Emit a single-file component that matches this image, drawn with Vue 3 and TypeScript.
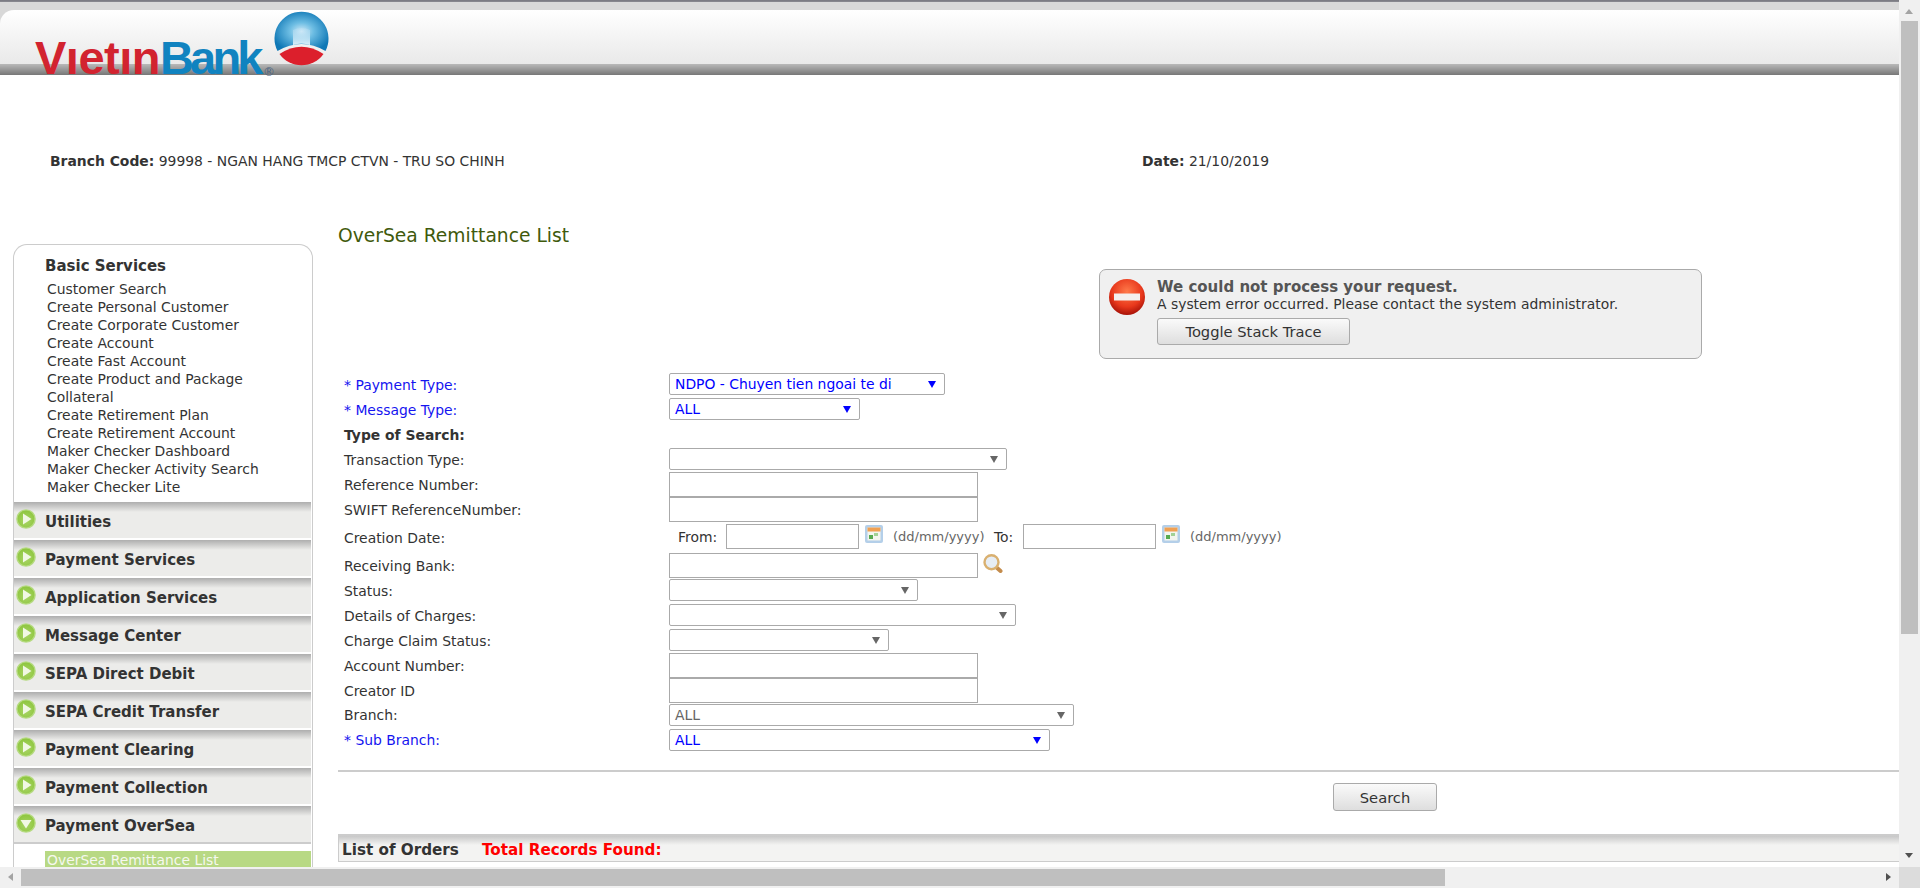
<script setup lang="ts">
interface Field {
  label: string;
  kind: 'select' | 'input' | 'heading' | 'date' | 'lookup';
  width?: number;
  value?: string;
  required?: boolean;
  muted?: boolean;
  low?: boolean;
  gap?: number;
}

const basicServices = [
  'Customer Search',
  'Create Personal Customer',
  'Create Corporate Customer',
  'Create Account',
  'Create Fast Account',
  'Create Product and Package',
  'Collateral',
  'Create Retirement Plan',
  'Create Retirement Account',
  'Maker Checker Dashboard',
  'Maker Checker Activity Search',
  'Maker Checker Lite'
];

const sections = [
  'Utilities',
  'Payment Services',
  'Application Services',
  'Message Center',
  'SEPA Direct Debit',
  'SEPA Credit Transfer',
  'Payment Clearing',
  'Payment Collection'
];

// gap = space under the row, the old table had uneven cell padding
const fields: Field[] = [
  { label: 'Payment Type:', kind: 'select', width: 276, value: 'NDPO - Chuyen tien ngoai te di', required: true, low: true, gap: 3 },
  { label: 'Message Type:', kind: 'select', width: 191, value: 'ALL', required: true, low: true, gap: 3 },
  { label: 'Type of Search:', kind: 'heading', low: true, gap: 3 },
  { label: 'Transaction Type:', kind: 'select', width: 338, low: true, gap: 2 },
  { label: 'Reference Number:', kind: 'input', width: 309, gap: 0 },
  { label: 'SWIFT ReferenceNumber:', kind: 'input', width: 309, gap: 2 },
  { label: 'Creation Date:', kind: 'date', low: true, gap: 4 },
  { label: 'Receiving Bank:', kind: 'lookup', width: 309, gap: 1 },
  { label: 'Status:', kind: 'select', width: 249, low: true, gap: 3 },
  { label: 'Details of Charges:', kind: 'select', width: 347, low: true, gap: 3 },
  { label: 'Charge Claim Status:', kind: 'select', width: 220, low: true, gap: 2 },
  { label: 'Account Number:', kind: 'input', width: 309, gap: 0 },
  { label: 'Creator ID', kind: 'input', width: 309, gap: 1 },
  { label: 'Branch:', kind: 'select', width: 405, value: 'ALL', muted: true, gap: 3 },
  { label: 'Sub Branch:', kind: 'select', width: 381, value: 'ALL', required: true, gap: 0 }
];
</script>

<template>
  <div class="page">
    <div class="view">
      <div class="content">
        <header class="top">
          <div class="top-shell"></div>
          <div class="logo">
            <span class="logo-text"><span class="red">Vıetın</span><span class="blue">Bank</span></span>
            <span class="logo-reg">®</span>
            <svg class="logo-globe" width="56" height="58" viewBox="0 0 56 58">
              <defs>
                <radialGradient id="globeBlue" cx="50%" cy="50%" r="55%">
                  <stop offset="0" stop-color="#cfe9f7" />
                  <stop offset="0.4" stop-color="#6dbde3" />
                  <stop offset="1" stop-color="#0f78b6" />
                </radialGradient>
                <linearGradient id="globeGlow" x1="0" y1="0" x2="0" y2="1">
                  <stop offset="0" stop-color="#c3e3f5" stop-opacity="0.3" />
                  <stop offset="1" stop-color="#dcf0fa" />
                </linearGradient>
              </defs>
              <path d="M3.5 42 A27 27 0 1 1 51.5 42 Q27.5 28 3.5 42 Z" fill="url(#globeBlue)" />
              <path d="M19 36 V21 Q27.5 17 36 21 V36 Q27.5 33 19 36 Z" fill="url(#globeGlow)" />
              <path d="M49.5 45 A27 27 0 0 1 5.5 45 Q27.5 30.5 49.5 45 Z" fill="#dc1f2c" />
            </svg>
          </div>
        </header>

        <div class="branch">
          <div class="branch-code"><b>Branch Code:</b> 99998 - NGAN HANG TMCP CTVN - TRU SO CHINH</div>
          <div><b>Date:</b> 21/10/2019</div>
        </div>

        <div class="columns">
          <aside class="sidebar">
            <h3 class="side-title">Basic Services</h3>
            <a v-for="item in basicServices" :key="item" class="side-link">{{ item }}</a>
            <div class="side-list">
              <div v-for="name in sections" :key="name" class="side-head">
                <svg class="bullet" width="20" height="20" viewBox="0 0 20 20">
                  <circle cx="10" cy="10" r="9.8" fill="#b5da80" />
                  <circle cx="10" cy="10" r="8.4" fill="url(#bulletGreen)" />
                  <path d="M7 4.5 L15.5 10 L7 15.5 Z" fill="#f1f8e3" />
                </svg>
                <span>{{ name }}</span>
              </div>
              <div class="side-head">
                <svg class="bullet" width="20" height="20" viewBox="0 0 20 20">
                  <defs>
                    <radialGradient id="bulletGreen" cx="50%" cy="60%" r="60%">
                      <stop offset="0" stop-color="#a9d566" />
                      <stop offset="1" stop-color="#8ec63f" />
                    </radialGradient>
                  </defs>
                  <circle cx="10" cy="10" r="9.8" fill="#b5da80" />
                  <circle cx="10" cy="10" r="8.4" fill="url(#bulletGreen)" />
                  <path d="M4.5 7 L15.5 7 L10 15.5 Z" fill="#f1f8e3" />
                </svg>
                <span>Payment OverSea</span>
              </div>
            </div>
            <a class="side-active">OverSea Remittance List</a>
          </aside>

          <main class="main">
            <h1 class="title">OverSea Remittance List</h1>

            <div class="error">
              <svg class="error-icon" width="36" height="36" viewBox="0 0 36 36">
                <defs>
                  <radialGradient id="errRed" cx="50%" cy="35%" r="65%">
                    <stop offset="0" stop-color="#ff7a4a" />
                    <stop offset="0.65" stop-color="#e8381c" />
                    <stop offset="1" stop-color="#a81208" />
                  </radialGradient>
                </defs>
                <circle cx="18" cy="18" r="18" fill="url(#errRed)" />
                <rect x="5" y="14.5" width="26" height="7" fill="#f4f0ee" />
              </svg>
              <div>
                <div class="error-title">We could not process your request.</div>
                <div class="error-text">A system error occurred. Please contact the system administrator.</div>
                <button class="btn btn-trace" type="button">Toggle Stack Trace</button>
              </div>
            </div>

            <form class="form">
              <div
                v-for="field in fields"
                :key="field.label"
                class="row"
                :style="{ paddingBottom: field.gap + 'px' }"
              >
                <label class="label" :class="{ required: field.required, strong: field.kind === 'heading', low: field.low }">
                  <template v-if="field.required">* </template>{{ field.label }}
                </label>

                <div
                  v-if="field.kind === 'select'"
                  class="select"
                  :class="{ required: field.required, muted: field.muted }"
                  :style="{ width: field.width + 'px' }"
                >{{ field.value }}</div>

                <input v-else-if="field.kind === 'input'" class="input" type="text" :style="{ width: field.width + 'px' }" />

                <div v-else-if="field.kind === 'lookup'" class="control-line">
                  <input class="input" type="text" :style="{ width: field.width + 'px' }" />
                  <svg class="lens" width="20" height="19" viewBox="0 0 20 19">
                    <path d="M13 13 L17.5 17" stroke="#c48c4c" stroke-width="4" stroke-linecap="round" />
                    <circle cx="8.5" cy="8.2" r="7" fill="#e6edf5" stroke="#d9b070" stroke-width="2.4" />
                  </svg>
                </div>

                <div v-else-if="field.kind === 'date'" class="control-line date-line">
                  <span class="from">From:</span>
                  <input class="input date" type="text" />
                  <svg class="cal" width="18" height="18" viewBox="0 0 18 18">
                    <rect width="18" height="18" rx="2" fill="#b4cfe9" />
                    <rect x="2.5" y="2.5" width="13" height="13" fill="#f3f5ef" />
                    <rect x="2.5" y="2.5" width="13" height="4" fill="#f0a052" />
                    <rect x="4" y="10" width="4" height="4" fill="#58ab50" />
                    <rect x="9" y="8" width="4" height="3" fill="#a2d196" />
                  </svg>
                  <span class="hint">(dd/mm/yyyy)</span>
                  <span class="to">To:</span>
                  <input class="input date" type="text" />
                  <svg class="cal" width="18" height="18" viewBox="0 0 18 18">
                    <rect width="18" height="18" rx="2" fill="#b4cfe9" />
                    <rect x="2.5" y="2.5" width="13" height="13" fill="#f3f5ef" />
                    <rect x="2.5" y="2.5" width="13" height="4" fill="#f0a052" />
                    <rect x="4" y="10" width="4" height="4" fill="#58ab50" />
                    <rect x="9" y="8" width="4" height="3" fill="#a2d196" />
                  </svg>
                  <span class="hint">(dd/mm/yyyy)</span>
                </div>
              </div>
            </form>

            <div class="actions">
              <button class="btn btn-search" type="button">Search</button>
            </div>

            <div class="orders">
              <span>List of Orders</span>
              <span class="total">Total Records Found:</span>
            </div>
          </main>
        </div>
      </div>

      <div class="vbar">
        <span class="arrow-up"></span>
        <div class="vthumb"></div>
        <span class="arrow-down"></span>
      </div>
    </div>

    <div class="hbar">
      <span class="arrow-left"></span>
      <div class="hthumb"></div>
      <span class="arrow-right"></span>
      <div class="corner"></div>
    </div>
  </div>
</template>

<style>
html,
body {
  margin: 0;
  height: 100%;
  overflow: hidden;
  background: #fff;
}
</style>

<style scoped>
.page {
  height: 888px;
  display: flex;
  flex-direction: column;
  font-family: "DejaVu Sans", Verdana, sans-serif;
  font-size: 13.9px;
  color: #333;
}

.view {
  flex: 1;
  min-height: 0;
  display: flex;
}

.content {
  flex: 1;
  min-width: 0;
  overflow: hidden;
}

/* header */
.top {
  position: relative;
  height: 75px;
  background: linear-gradient(#77777f 0, #8b8b92 2px, #d8d8d8 2px, #d8d8d8 10px);
}

.top-shell {
  height: 65px;
  position: relative;
  top: 10px;
  border-top-left-radius: 14px;
  background: linear-gradient(#fff 0, #e9e9e9 54px, #b9b9b9 54px, #777 65px);
}

.logo {
  position: absolute;
  left: 35px;
  top: 11px;
  width: 300px;
  height: 70px;
}

.logo-text {
  position: absolute;
  left: 0;
  top: 22px;
  font-family: "Liberation Sans", Arial, sans-serif;
  font-size: 47px;
  line-height: 50px;
  font-weight: 700;
  white-space: nowrap;
}

.red {
  color: #d2232f;
  letter-spacing: -0.5px;
}

.blue {
  color: #1083c0;
  letter-spacing: -3.8px;
}

.logo-reg {
  position: absolute;
  left: 228px;
  top: 54px;
  font-size: 12px;
  line-height: 14px;
  color: #4c6480;
}

.logo-globe {
  position: absolute;
  left: 239px;
  top: -2px;
}

/* branch line */
.branch {
  display: flex;
  padding: 77px 0 0 50px;
  line-height: 18px;
}

.branch-code {
  width: 1092px;
}

.columns {
  display: flex;
  gap: 25px;
  padding: 52px 0 0 13px;
  align-items: flex-start;
}

/* sidebar */
.sidebar {
  flex: none;
  width: 300px;
  height: 640px;
  margin-top: 22px;
  box-sizing: border-box;
  border: 1px solid #ccc;
  border-bottom: 0;
  border-radius: 14px 14px 0 0;
  padding-top: 12px;
  overflow: hidden;
}

.side-title {
  margin: 0 0 5px 31px;
  font-size: 15px;
  line-height: 18px;
  color: #333;
}

.side-link {
  display: block;
  padding-left: 33px;
  line-height: 18px;
}

.side-list {
  margin-top: 6px;
}

.side-head {
  height: 38px;
  box-sizing: border-box;
  margin-right: 1px;
  padding: 8px 0 0 31px;
  position: relative;
  background: linear-gradient(#aeaeae 0, #ececea 10px);
  border-bottom: 2px solid #fff;
  font-weight: 700;
  font-size: 15px;
  line-height: 24px;
}

.side-head:last-child {
  border-bottom-color: #ccc;
}

.bullet {
  position: absolute;
  left: 2px;
  top: 7px;
}

.side-active {
  display: block;
  margin: 7px 1px 0 31px;
  padding-left: 2px;
  background: #b8d984;
  color: #f5f8ee;
  line-height: 18px;
}

/* main */
.main {
  flex: 1;
  min-width: 0;
}

.title {
  margin: 0;
  font-size: 18.7px;
  line-height: 28px;
  font-weight: 400;
  color: #3f5a0c;
}

.error {
  box-sizing: border-box;
  width: 603px;
  height: 90px;
  margin: 19px 0 14px 761px;
  display: flex;
  padding: 9px 0 0 9px;
  background: #f0f0f0;
  border: 1px solid #aaa;
  border-radius: 7px;
}

.error-icon {
  flex: none;
  margin-right: 12px;
}

.error-title {
  margin-top: -1px;
  font-weight: 700;
  font-size: 15px;
  line-height: 18px;
  color: #555;
}

.error-text {
  line-height: 16px;
}

.btn {
  font-family: inherit;
  font-size: 14.7px;
  color: #333;
  border: 1px solid #aaa;
  border-radius: 3px;
  background: linear-gradient(#fafafa, #dedede);
  padding: 0;
}

.btn-trace {
  display: block;
  width: 193px;
  height: 27px;
  margin-top: 6px;
}

/* form */
.row {
  display: grid;
  grid-template-columns: 325px 1fr;
  padding-left: 6px;
  align-items: start;
}

.label {
  align-self: center;
}

.label.low {
  margin-top: 2px;
}

.label.required {
  color: #1515f0;
}

.label.strong {
  font-weight: 700;
  height: 20px;
  line-height: 20px;
}

.select {
  box-sizing: border-box;
  position: relative;
  height: 22px;
  line-height: 20px;
  padding-left: 5px;
  border: 1px solid #aaa;
  border-radius: 2px;
  color: #333;
}

.select::after {
  content: "";
  position: absolute;
  right: 8px;
  top: 7px;
  border-left: 4px solid transparent;
  border-right: 4px solid transparent;
  border-top: 7px solid #666;
}

.select.required {
  color: #0000ff;
}

.select.required::after {
  border-top-color: #0000ff;
}

.select.muted {
  color: #666;
}

.input {
  display: block;
  box-sizing: border-box;
  height: 25px;
  margin: 0;
  padding: 0;
  border: 1px solid #aaa;
  border-radius: 0;
  background: #fff;
}

.control-line {
  display: flex;
  align-items: flex-start;
}

.lens {
  flex: none;
  margin: 1px 0 0 5px;
}

.date-line {
  align-items: center;
}

.from {
  flex: none;
  width: 48px;
  margin-left: 9px;
}

.input.date {
  flex: none;
  width: 133px;
}

.cal {
  flex: none;
  align-self: flex-start;
  margin: 1px 10px 0 6px;
}

.hint {
  flex: none;
  width: 91px;
  color: #666;
  font-size: 13px;
  white-space: nowrap;
}

.to {
  flex: none;
  width: 29px;
  margin-left: 10px;
}

/* bottom of the form */
.actions {
  margin-top: 19px;
  padding: 11px 0 0 995px;
  border-top: 2px solid #ccc;
  height: 37px;
}

.btn-search {
  display: block;
  width: 104px;
  height: 28px;
}

.orders {
  margin-top: 14px;
  height: 28px;
  box-sizing: border-box;
  padding: 4px 0 0 3px;
  border: 1px solid #ccc;
  border-top-width: 2px;
  border-right: 0;
  background: linear-gradient(#c8c8c8 0, #f3f3f2 9px);
  font-weight: 700;
  font-size: 15.2px;
  line-height: 20px;
}

.total {
  color: #f00;
  margin-left: 23px;
}

/* scrollbars, drawn since the real ones are hidden in the shot */
.vbar {
  flex: none;
  width: 21px;
  position: relative;
  background: #f0f0f0;
}

.vthumb {
  position: absolute;
  left: 2px;
  top: 21px;
  width: 17px;
  height: 613px;
  background: #bfbfbf;
}

.hbar {
  flex: none;
  height: 21px;
  position: relative;
  background: #f0f0f0;
}

.hthumb {
  position: absolute;
  left: 21px;
  top: 2px;
  width: 1424px;
  height: 17px;
  background: #bfbfbf;
}

.corner {
  position: absolute;
  right: 0;
  top: 0;
  width: 21px;
  height: 21px;
  background: #dcdcdc;
}

.arrow-up,
.arrow-down,
.arrow-left,
.arrow-right {
  position: absolute;
  width: 0;
  height: 0;
  border-style: solid;
}

.arrow-up {
  left: 6px;
  top: 9px;
  border-width: 0 4.5px 5px;
  border-color: transparent transparent #a3a3a3;
}

.arrow-down {
  left: 6px;
  bottom: 9px;
  border-width: 5px 4.5px 0;
  border-color: #505050 transparent transparent;
}

.arrow-left {
  left: 8px;
  top: 6px;
  border-width: 4.5px 5px 4.5px 0;
  border-color: transparent #a3a3a3 transparent transparent;
}

.arrow-right {
  right: 29px;
  top: 6px;
  border-width: 4.5px 0 4.5px 5px;
  border-color: transparent transparent transparent #505050;
}
</style>
